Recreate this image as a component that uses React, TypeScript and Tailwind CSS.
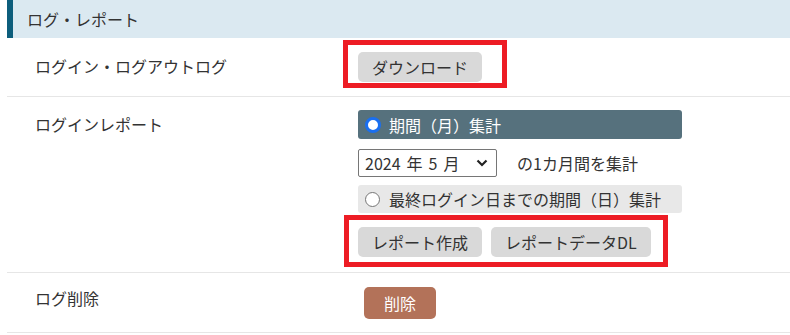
import React from "react";

const font = { fontFamily: '"Noto Sans CJK JP", "Noto Sans", sans-serif' };

const GrayButton: React.FC<{ label: string }> = ({ label }) => (
  <button className="h-[30px] px-[14px] rounded-[5px] bg-[#d9d9d9] text-[16px] leading-none text-[#333]">
    {label}
  </button>
);

const App: React.FC = () => {
  return (
    <div
      className="w-[790px] h-[335px] bg-white pl-[7px] text-[16px] text-[#333] overflow-hidden"
      style={font}
    >
      {/* Section header */}
      <div className="h-[38px] flex items-center bg-[#dbe9f1] border-l-[6px] border-[#0d5e7c] pl-[14px]">
        ログ・レポート
      </div>

      {/* Login / logout log */}
      <div className="flex border-b border-[#e6e6e6] h-[59px]">
        <div className="w-[351px] pl-[28px] pt-[16px] leading-6">
          ログイン・ログアウトログ
        </div>
        <div className="relative pt-[14px]">
          <div className="absolute left-[-15px] top-[2px] w-[164px] h-[48px] border-[5px] border-[#ed1c24]"></div>
          <GrayButton label="ダウンロード" />
        </div>
      </div>

      {/* Login report */}
      <div className="flex border-b border-[#e6e6e6] h-[176px]">
        <div className="w-[351px] pl-[28px] pt-[15px] leading-6">
          ログインレポート
        </div>
        <div className="relative pt-[13px] flex flex-col">
          <div className="w-[324px] h-[29px] rounded-[3px] bg-[#56717d] flex items-center pl-[7px] text-white">
            <span className="w-[16px] h-[16px] rounded-full border-[3px] border-[#1a6ff0] bg-white mr-[8px]"></span>
            <span className="leading-none">期間（月）集計</span>
          </div>
          <div className="flex items-center mt-[10px]">
            <div className="w-[139px] h-[28px] border border-[#767676] rounded-[2px] bg-white flex items-center justify-between pl-[6px] pr-[8px]">
              <span className="flex gap-[6px] leading-none">
                <span>2024</span>
                <span>年</span>
                <span>5</span>
                <span>月</span>
              </span>
              <svg width="12" height="8" viewBox="0 0 12 8">
                <path d="M1.5 1.5 L6 6 L10.5 1.5" fill="none" stroke="#222" strokeWidth="2.2" />
              </svg>
            </div>
            <span className="ml-[20px] leading-none">の1カ月間を集計</span>
          </div>
          <div className="w-[324px] h-[28px] rounded-[3px] bg-[#e8e8e8] flex items-center pl-[7px] mt-[8px]">
            <span className="w-[15px] h-[15px] rounded-full border-[1.5px] border-[#767676] bg-white mr-[9px]"></span>
            <span className="leading-none">最終ログイン日までの期間（日）集計</span>
          </div>
          <div className="relative flex gap-[9px] mt-[14px]">
            <div className="absolute left-[-14px] top-[-12px] w-[324px] h-[52px] border-[5px] border-[#ed1c24]"></div>
            <GrayButton label="レポート作成" />
            <GrayButton label="レポートデータDL" />
          </div>
        </div>
      </div>

      {/* Delete log */}
      <div className="flex border-b border-[#e6e6e6] h-[60px]">
        <div className="w-[351px] pl-[28px] pt-[13px] leading-6">ログ削除</div>
        <div className="pt-[14px] pl-[6px]">
          <button className="h-[32px] w-[72px] rounded-[5px] bg-[#b37259] text-white text-[16px] leading-none">
            削除
          </button>
        </div>
      </div>
    </div>
  );
};

export default App;
